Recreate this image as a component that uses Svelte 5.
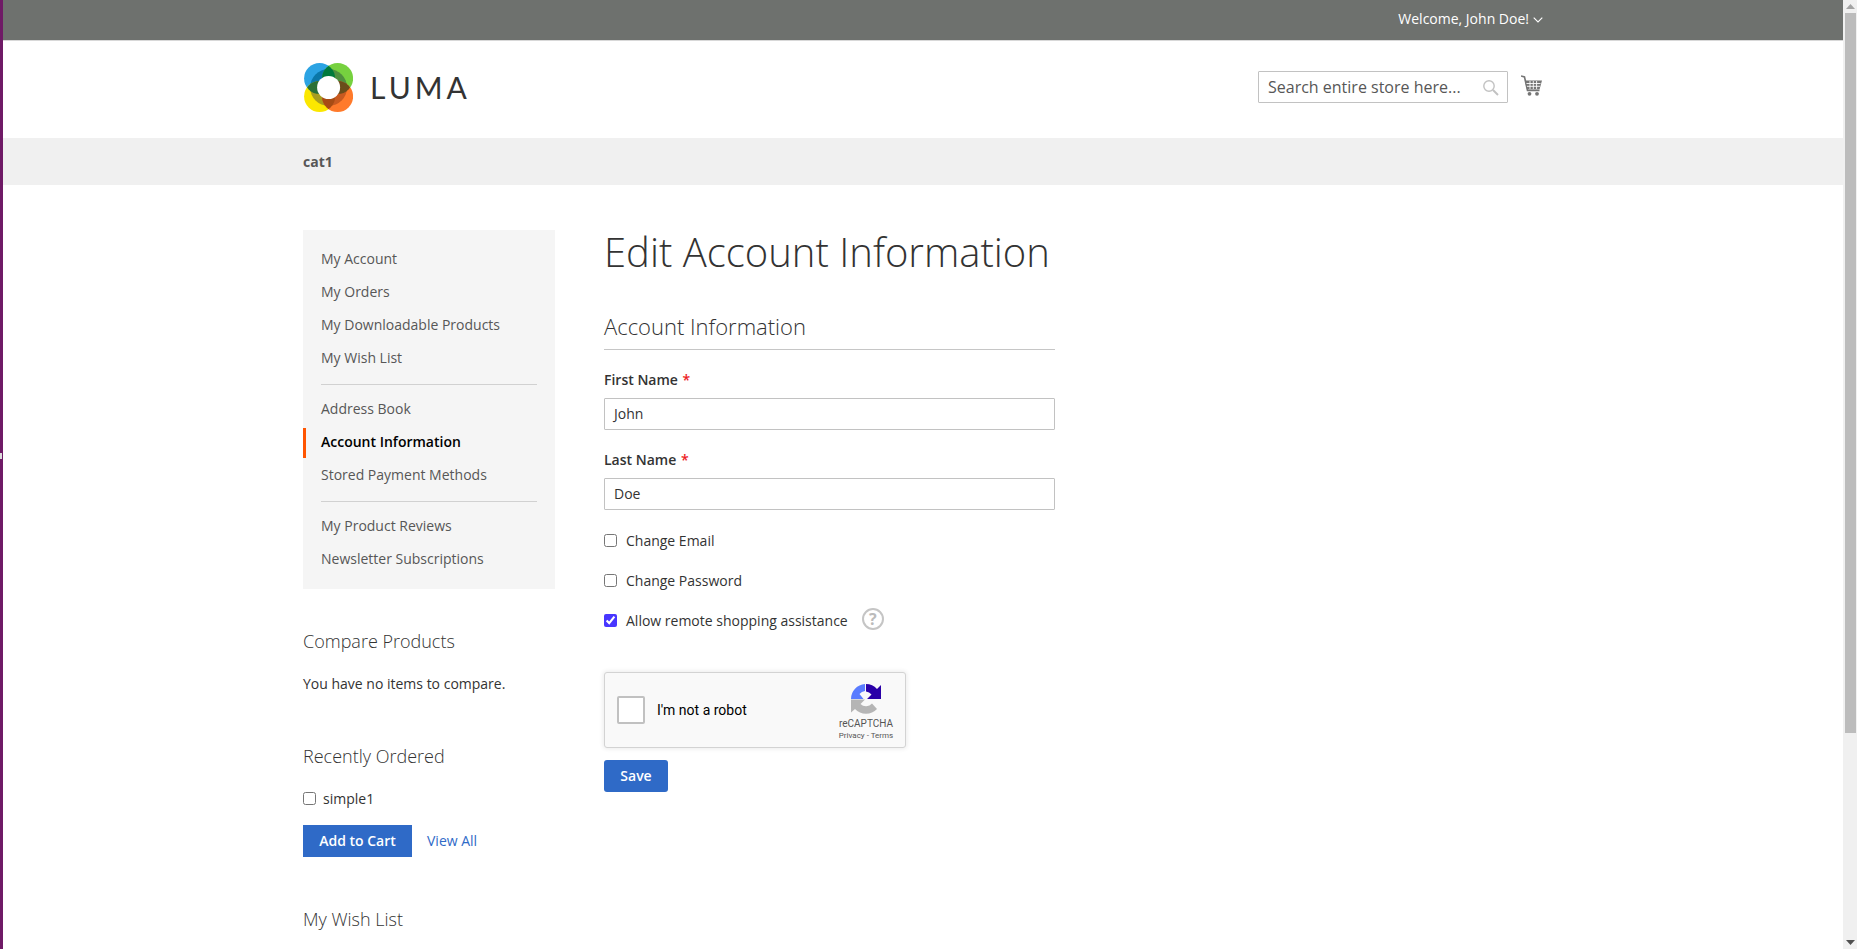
<script>
  const groups = [
    [{ t: 'My Account' }, { t: 'My Orders' }, { t: 'My Downloadable Products' }, { t: 'My Wish List' }],
    [{ t: 'Address Book' }, { t: 'Account Information', active: true }, { t: 'Stored Payment Methods' }],
    [{ t: 'My Product Reviews' }, { t: 'Newsletter Subscriptions' }]
  ];
</script>

<div class="shell">
  <div class="strip"><div class="grip"></div></div>
  <div class="page">
    <div class="topbar">
      <div class="wrap topwrap">
        <span>Welcome, John Doe!</span>
        <svg class="chev" width="10" height="6" viewBox="0 0 10 6"><path d="M.7.7 5 5 9.300.7" fill="none" stroke="#fff" stroke-width="1.100"/></svg>
      </div>
    </div>
    <header>
      <div class="wrap headwrap">
        <div class="logo">
          <svg width="50" height="50" viewBox="0 0 50 50">
            <defs>
              <clipPath id="cb"><circle cx="16" cy="16" r="15.500"/></clipPath>
              <clipPath id="cg"><circle cx="34" cy="16" r="15.500"/></clipPath>
              <clipPath id="cy"><circle cx="16" cy="34" r="15.500"/></clipPath>
              <clipPath id="co"><circle cx="34" cy="34" r="15.500"/></clipPath>
            </defs>
            <g transform="translate(.6 -.5)">
              <circle cx="16" cy="16" r="15.500" fill="#2ba3e3"/>
              <circle cx="34" cy="16" r="15.500" fill="#76d13f"/>
              <circle cx="16" cy="34" r="15.500" fill="#fbe700"/>
              <circle cx="34" cy="34" r="15.500" fill="#ff7a2b"/>
              <circle cx="25" cy="25" r="18.500" fill="#0a77a8" clip-path="url(#cb)"/>
              <circle cx="25" cy="25" r="18.500" fill="#4f8f3f" clip-path="url(#cg)"/>
              <circle cx="25" cy="25" r="18.500" fill="#a79d20" clip-path="url(#cy)"/>
              <circle cx="25" cy="25" r="18.500" fill="#c85a20" clip-path="url(#co)"/>
              <g clip-path="url(#cb)"><circle cx="34" cy="16" r="15.500" fill="#007a3d"/></g>
              <g clip-path="url(#cy)"><circle cx="34" cy="34" r="15.500" fill="#a84c14"/></g>
              <g clip-path="url(#cb)"><circle cx="16" cy="34" r="15.500" fill="#2a7035"/></g>
              <g clip-path="url(#cg)"><circle cx="34" cy="34" r="15.500" fill="#6a4d1a"/></g>
              <circle cx="25" cy="25" r="11.500" fill="#fff"/>
            </g>
          </svg>
          <span class="word">LUMA</span>
        </div>
        <div class="tools">
          <div class="search">
            <span class="ph">Search entire store here...</span>
            <svg width="17" height="17" viewBox="0 0 17 17"><circle cx="7" cy="7" r="5.200" fill="none" stroke="#c2c2c2" stroke-width="1.400"/><path d="m11 11 5 5" stroke="#c2c2c2" stroke-width="2"/></svg>
          </div>
          <svg class="cart" width="21" height="21" viewBox="0 0 21 21">
            <path d="M0 1 3.500 2 6.500 15.500H18.500" fill="none" stroke="#757575" stroke-width="1.600"/>
            <path d="M3.800 5.500H21l-2.500 9H6z" fill="#757575"/>
            <path d="M5.500 8.500h14M6 11.300h13M9 6v8M12.300 6v8M15.600 6v8" stroke="#fff" stroke-width=".9"/>
            <circle cx="8.500" cy="18.800" r="1.900" fill="#757575"/><circle cx="16" cy="18.800" r="1.900" fill="#757575"/>
          </svg>
        </div>
      </div>
    </header>
    <nav><div class="wrap"><span class="cat">cat1</span></div></nav>
    <div class="wrap columns">
      <aside>
        <div class="menu">
          {#each groups as g, i}
            {#if i > 0}<div class="sep"></div>{/if}
            {#each g as item}
              <div class="item" class:active={item.active}>{item.t}</div>
            {/each}
          {/each}
        </div>
        <section class="compare">
          <h3>Compare Products</h3>
          <p>You have no items to compare.</p>
        </section>
        <section class="recent">
          <h3>Recently Ordered</h3>
          <label class="simple"><input type="checkbox" /><span>simple1</span></label>
          <div class="actions"><button class="cartbtn">Add to Cart</button><span class="link">View All</span></div>
        </section>
        <section class="wish"><h3>My Wish List</h3></section>
      </aside>
      <main>
        <h1>Edit Account Information</h1>
        <h2>Account Information</h2>
        <div class="field">
          <div class="lab">First Name <em>*</em></div>
          <div class="input">John</div>
        </div>
        <div class="field">
          <div class="lab">Last Name <em>*</em></div>
          <div class="input">Doe</div>
        </div>
        <label class="check c1"><input type="checkbox" /><span>Change Email</span></label>
        <label class="check"><input type="checkbox" /><span>Change Password</span></label>
        <label class="check"><input type="checkbox" checked /><span>Allow remote shopping assistance</span><span class="help">?</span></label>
        <div class="captcha">
          <div class="box"></div>
          <span class="robot">I'm not a robot</span>
          <div class="brand">
            <svg width="30" height="30" viewBox="0 0 30 30">
              <path d="M14 0V7A8 8 0 0 0 8.500 10L12.500 15H0A15 15 0 0 1 14 0Z" fill="#5a7cff"/>
              <path d="M15 0A15 15 0 0 1 26 5L30 1V15H16L20.500 10.500A8 8 0 0 0 15 7.500Z" fill="#2a00a8"/>
              <path d="M0 15.500H14L9.500 20A8 8 0 0 0 21 19.500L26 25A15 15 0 0 1 4 25L0 28.500Z" fill="#b5b5b5"/>
            </svg>
            <span class="rc">reCAPTCHA</span>
            <span class="pt">Privacy - Terms</span>
          </div>
        </div>
        <button class="save">Save</button>
      </main>
    </div>
  </div>
  <div class="scroll">
    <svg width="9" height="5" viewBox="0 0 9 5"><path d="M4.500 0 9 5H0z" fill="#a3a3a3"/></svg>
    <div class="thumb"></div>
    <svg class="down" width="9" height="5" viewBox="0 0 9 5"><path d="M0 0h9L4.500 5z" fill="#505050"/></svg>
  </div>
</div>

<style>
  :global(html) { overflow: hidden; }
  :global(body) { margin: 0; background: #fff; overflow: hidden; }
  .shell { display: flex; width: 1857px; height: 949px; overflow: hidden; font-family: "Open Sans", sans-serif; font-size: 14px; color: #333; }
  .strip { width: 3px; background: #6f1a66; flex: none; position: relative; }
  .grip { position: absolute; left: 0; top: 453px; width: 2px; height: 6px; background: #ddd; }
  .page { flex: 1; min-width: 0; }
  .wrap { width: 1240px; margin: 0 auto; }
  .topbar { height: 40px; background: #6e716e; color: #fff; border-bottom: 1px solid #d8d8d8; }
  .topwrap { height: 37px; display: flex; justify-content: flex-end; align-items: center; gap: 4px; }
  .chev { margin-top: 2px; }
  header { height: 97px; }
  .headwrap { display: flex; justify-content: space-between; }
  .logo { display: flex; align-items: center; margin-top: 22px; height: 50px; }
  .word { margin-left: 17px; margin-bottom: 2px; font-family: "Lato", sans-serif; font-size: 30px; letter-spacing: 4px; color: #333; font-weight: 400; }
  .tools { display: flex; align-items: flex-start; }
  .search { width: 250px; height: 32px; margin-top: 30px; box-sizing: border-box; border: 1px solid #c2c2c2; border-radius: 1px; display: flex; align-items: center; justify-content: space-between; padding: 0 8px 0 9px; font-size: 16px; color: #575757; }
  .cart { margin: 34px 1px 0 13px; }
  nav { height: 47px; background: #f0f0f0; display: flex; align-items: center; }
  .cat { font-weight: 700; color: #575757; }
  .columns { display: flex; padding-top: 45px; }
  aside { width: 252px; flex: none; }
  .menu { background: #f5f5f5; padding: 14px 0; height: 359px; box-sizing: border-box; }
  .item { height: 33px; line-height: 30px; padding-left: 18px; color: #575757; position: relative; }
  .item.active { color: #000; font-weight: 600; }
  .item.active::before { content: ""; position: absolute; left: 0; top: 1px; bottom: 2px; width: 3px; background: #ff5501; }
  .sep { height: 1px; background: #d1d1d1; margin: 8px 18px 9px; }
  h3 { font-weight: 300; font-size: 18px; margin: 0; color: #333; line-height: 24px; }
  .compare { margin-top: 40px; }
  .compare p { margin: 19px 0 0; line-height: 24px; }
  .recent { margin-top: 48px; }
  .simple { display: flex; align-items: center; gap: 7px; margin-top: 18px; height: 24px; }
  input[type=checkbox] { width: 13px; height: 13px; margin: 0; accent-color: #4836ff; }
  .actions { display: flex; align-items: center; gap: 15px; margin-top: 15px; }
  .cartbtn { width: 109px; height: 32px; background: #2f6ac7; color: #fff; border: 0; font: 600 14px "Open Sans", sans-serif; padding: 0 0 2px; }
  .link { color: #2f6ac7; margin-bottom: 2px; }
  .wish { margin-top: 50px; }
  main { margin-left: 49px; width: 451px; }
  h1 { font-weight: 300; font-size: 40px; line-height: 50px; margin: -3px 0 0; color: #333; }
  h2 { font-weight: 300; font-size: 22px; line-height: 28px; margin: 35px 0 0; padding-bottom: 9px; border-bottom: 1px solid #c6c6c6; color: #333; }
  .field { margin-top: 19px; }
  .lab { font-weight: 600; line-height: 22px; height: 24px; margin-bottom: 5px; }
  .lab em { color: #ed1c24; font-style: normal; margin-left: 1px; }
  .input { height: 32px; box-sizing: border-box; border: 1px solid #c2c2c2; border-radius: 1px; line-height: 30px; padding-left: 9px; }
  .check { display: flex; align-items: center; gap: 9px; height: 24px; margin-top: 16px; }
  .check.c1 { margin-top: 18px; }
  .help { width: 22px; height: 22px; margin-left: 5px; margin-top: -3px; border: 2px solid #c5c5c5; border-radius: 50%; box-sizing: border-box; color: #bbb; font-weight: 700; font-size: 16px; line-height: 18px; text-align: center; }
  .captcha { width: 302px; height: 76px; margin-top: 40px; box-sizing: border-box; border: 1px solid #d3d3d3; border-radius: 3px; background: #f9f9f9; box-shadow: 0 0 4px 1px rgba(0,0,0,.08); display: flex; align-items: center; padding-left: 12px; font-family: Roboto, sans-serif; }
  .box { width: 28px; height: 28px; border: 2px solid #c1c1c1; border-radius: 2px; background: #fff; box-sizing: border-box; }
  .robot { font-size: 14px; color: #000; margin-left: 12px; }
  .brand { margin-left: auto; width: 70px; align-self: flex-start; padding-top: 11px; display: flex; flex-direction: column; align-items: center; color: #555; margin-right: 4px; }
  .rc { font-size: 10px; line-height: 12px; margin-top: 4px; }
  .pt { font-size: 8px; line-height: 12px; }
  .save { display: block; width: 64px; height: 32px; margin-top: 12px; background: #2f6ac7; color: #fff; border: 0; border-radius: 3px; font: 600 14px "Open Sans", sans-serif; padding: 0 0 1px; }
  .scroll { width: 14px; flex: none; background: #f0f0f0; display: flex; flex-direction: column; align-items: center; box-sizing: border-box; padding-top: 4px; }
  .thumb { width: 11px; height: 720px; margin-top: 4px; background: #bcbcbc; }
  .down { margin-top: auto; margin-bottom: 4px; }
</style>
